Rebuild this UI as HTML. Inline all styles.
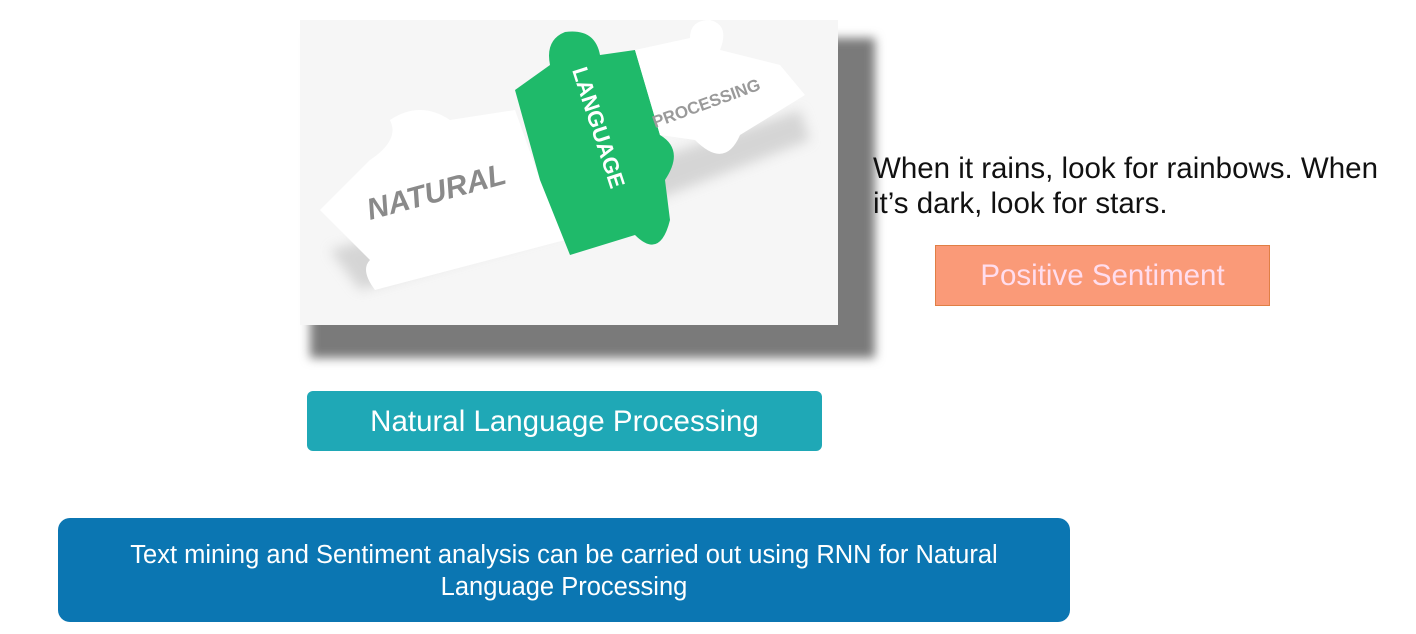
<!DOCTYPE html>
<html><head><style>
body{margin:0;width:1416px;height:634px;background:#fff;position:relative;overflow:hidden;font-family:"Liberation Sans",sans-serif}
.a{position:absolute}
</style></head><body>
<div class="a" style="left:310px;top:38px;width:565px;height:320px;background:#7a7a7a;filter:blur(5px)"></div>
<div class="a" style="left:300px;top:20px;width:538px;height:305px;background:#f6f6f6"></div>
<svg class="a" style="left:300px;top:20px" width="538" height="305" viewBox="0 0 538 305">
<defs><filter id="s"><feGaussianBlur stdDeviation="6"/></filter></defs>
<g filter="url(#s)" fill="#c8c8c8" opacity=".7"><path d="M30 230 L320 150 L500 90 L510 120 L330 190 L60 270Z"/></g>
<path d="M20 190 L70 140 Q100 120 90 100 Q120 80 150 100 L215 90 L240 160 L265 220 L75 270 Q60 250 70 240 Q50 220 20 190Z" fill="#fff"/>
<path d="M215 70 L250 45 Q245 20 265 12 Q295 8 300 35 L335 30 L360 115 Q385 130 365 160 L370 200 Q360 240 335 215 L270 235 L240 160Z" fill="#1fba6a"/>
<path d="M335 30 L390 18 Q390 0 410 0 Q430 5 420 30 L480 45 L505 75 L440 115 Q425 150 395 120 L360 115Z" fill="#fff"/>
<text x="70" y="200" font-size="30" font-weight="bold" font-style="italic" fill="#8a8a8a" transform="rotate(-15 70 200)">NATURAL</text>
<text x="355" y="108" font-size="17" font-weight="bold" fill="#9a9a9a" transform="rotate(-20 355 108)">PROCESSING</text>
<text x="272" y="50" font-size="22" font-weight="bold" fill="#fff" transform="rotate(72 272 50)">LANGUAGE</text>
</svg>
<div class="a" style="left:873px;top:151px;font-size:29.5px;line-height:35px;color:#111;width:560px;white-space:nowrap">When it rains, look for rainbows. When<br>it’s dark, look for stars.</div>
<div class="a" style="left:935px;top:245px;width:333px;height:59px;background:#fa9a78;border:1px solid #e07f45;color:#fde;font-size:29.5px;text-align:center;line-height:59px">Positive Sentiment</div>
<div class="a" style="left:307px;top:391px;width:515px;height:60px;background:#1fa8b6;border-radius:6px;color:#fff;font-size:29.5px;text-align:center;line-height:62px">Natural Language Processing</div>
<div class="a" style="left:58px;top:518px;width:1012px;height:104px;background:#0b76b2;border-radius:12px;color:#fff;font-size:25.5px;text-align:center;line-height:32px;padding-top:21px;box-sizing:border-box">Text mining and Sentiment analysis can be carried out using RNN for Natural<br>Language Processing</div>
</body></html>
